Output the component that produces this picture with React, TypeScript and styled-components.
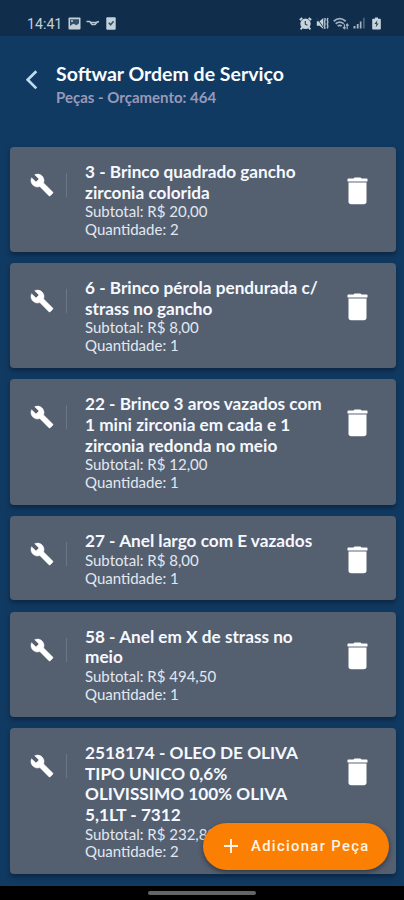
import React from "react";
import styled, { createGlobalStyle } from "styled-components";
import { MdBuild } from "react-icons/md";

const GlobalStyle = createGlobalStyle`
  * { box-sizing: border-box; }
  html, body { margin: 0; padding: 0; background: #000; }
  body { font-family: Lato, "Liberation Sans", sans-serif; }
`;

const Screen = styled.div`
  position: relative;
  display: flex;
  flex-direction: column;
  width: 404px;
  height: 900px;
  overflow: hidden;
  background: #113a62;
`;

const StatusBar = styled.div`
  display: flex;
  flex: none;
  align-items: center;
  justify-content: space-between;
  height: 36px;
  padding: 10px 23px 0 27px;
  background: #102d4b;
  color: #c3ced9;
`;

const StatusGroup = styled.div<{ $gap: number }>`
  display: flex;
  align-items: center;
  gap: ${(p) => p.$gap}px;
`;

const Clock = styled.span`
  width: 35px;
  padding-top: 1px;
  font: 400 14.2px/16px Roboto, sans-serif;
  white-space: nowrap;
`;

const BatterySlot = styled.div`
  display: flex;
  margin-left: 3px;
`;

const Header = styled.header`
  display: flex;
  flex: none;
  height: 111px;
  padding: 26px 24px 0 26px;
`;

const BackButton = styled.button`
  display: flex;
  width: 30px;
  height: 32px;
  padding: 8px 0 0;
  border: 0;
  background: none;
  color: #bfdbef;
`;

const Title = styled.h1`
  margin: 0;
  color: #fafcff;
  font-size: 19.5px;
  line-height: 23px;
  font-weight: 700;
  white-space: nowrap;
`;

const Subtitle = styled.p`
  margin: 3px 0 0;
  color: #9899b9;
  font-size: 15px;
  line-height: 18px;
  font-weight: 700;
`;

const List = styled.main`
  display: flex;
  flex: 1;
  flex-direction: column;
  gap: 11.5px;
  padding: 0 8.5px 0 10px;
`;

const Card = styled.article`
  display: flex;
  flex: none;
  align-items: flex-start;
  padding: 14.8px 20px 13.1px;
  border-radius: 4px;
  background: #545f70;
  box-shadow: 0 3px 5px rgba(7, 22, 42, 0.55);
`;

const ToolIcon = styled.div`
  display: flex;
  width: 37px;
  height: 24px;
  margin: 11px 0 0;
  color: #fff;

  path:last-child {
    stroke: currentColor;
    stroke-width: 0.5px;
  }
`;

const Divider = styled.div`
  width: 1px;
  height: 24px;
  margin: 11px 18px 0 -1px;
  background: #6c7686;
`;

const CardText = styled.div`
  width: 240px;
  color: #eef3fb;
`;

const PartName = styled.h2`
  margin: 0;
  color: #f5f9ff;
  font-size: 17.2px;
  line-height: 20.7px;
  font-weight: 700;
  white-space: pre;
`;

const Detail = styled.p`
  margin: 0;
  color: #e2e8f1;
  font-size: 15px;
  line-height: 17.7px;
  white-space: nowrap;
`;

const DeleteButton = styled.button`
  display: flex;
  flex: none;
  margin: 15px 0 0 22px;
  padding: 0;
  border: 0;
  background: none;
`;

const AddButton = styled.button`
  position: absolute;
  right: 15px;
  bottom: 30px;
  display: flex;
  align-items: center;
  gap: 13px;
  width: 186px;
  height: 47px;
  padding: 0 0 1px 21px;
  border: 0;
  border-radius: 24px;
  background: #fa7f02;
  box-shadow: 0 2px 5px rgba(20, 28, 42, 0.6);
  color: #fff5e8;
  font: 500 14.8px/20px Roboto, sans-serif;
  letter-spacing: 1.33px;
  white-space: nowrap;
`;

const NavigationBar = styled.div`
  display: flex;
  flex: none;
  justify-content: center;
  height: 14px;
  padding-top: 5px;
  background: #000;
`;

const HomeHandle = styled.div`
  width: 108px;
  height: 4px;
  border-radius: 2px;
  background: #656565;
`;

interface Part {
  name: string;
  subtotal: string;
  quantity: number;
}

const parts: Part[] = [
  { name: "3 - Brinco quadrado gancho\nzirconia colorida", subtotal: "20,00", quantity: 2 },
  { name: "6 - Brinco pérola pendurada c/\nstrass no gancho", subtotal: "8,00", quantity: 1 },
  { name: "22 - Brinco 3 aros vazados com\n1 mini zirconia em cada e 1\nzirconia redonda no meio", subtotal: "12,00", quantity: 1 },
  { name: "27 - Anel largo com E vazados", subtotal: "8,00", quantity: 1 },
  { name: "58 - Anel em X de strass no\nmeio", subtotal: "494,50", quantity: 1 },
  { name: "2518174 - OLEO DE OLIVA\nTIPO UNICO 0,6%\nOLIVISSIMO 100% OLIVA\n5,1LT - 7312", subtotal: "232,80", quantity: 2 },
];

const TrashIcon = () => (
  <svg width="21" height="28" viewBox="0 0 21 28">
    <path d="M6.5 1.5 7.5.5h6l1 1h5.2q.8 0 .8.8v2.2H.5V2.3q0-.8.8-.8z" fill="#fff" />
    <path d="M1.5 4.5h18v1.8h-18z" fill="#aeb4bd" />
    <path d="M1.5 6h18v18.5q0 2.7-2.7 2.7H4.2q-2.7 0-2.7-2.7z" fill="#fff" />
  </svg>
);

const PictureIcon = () => (
  <svg width="13" height="13" viewBox="0 0 13 13">
    <rect x=".5" y=".5" width="12" height="12" rx="1" fill="#c3d0d8" />
    <path d="M2 2.2h9v4L8.5 8.3 5.3 6.8 2 9z" fill="#345168" />
    <circle cx="4" cy="4" r="1" fill="#c3d0d8" />
  </svg>
);

const KeyIcon = () => (
  <svg width="14" height="13" viewBox="0 0 14 13" fill="none" stroke="#b9c7d3">
    <path d="M.5 4.5h3l1.5 1h5l3-1" strokeWidth="1.6" />
    <path d="M4.5 5.5 6 7.6h3l2-2.4" strokeWidth="1.5" />
  </svg>
);

const TaskIcon = () => (
  <svg width="10" height="13" viewBox="0 0 10 13">
    <rect x=".3" y=".3" width="9.4" height="12.4" rx="1" fill="#c3d3dc" />
    <path d="m2.8 5.7 1.8 2 3-3.4" fill="none" stroke="#38536a" strokeWidth="1.7" />
  </svg>
);

const AlarmIcon = () => (
  <svg width="13" height="13" viewBox="0 0 13 13">
    <circle cx="6.5" cy="6.8" r="5.2" fill="#c7d4dc" />
    <path d="m.8 3 2.5-2M9.7 1l2.5 2M3.2 10.5l-1.6 1.8m8.2-1.8 1.6 1.8" stroke="#c7d4dc" strokeWidth="1.9" />
    <path d="M6.3 4v3.2l2.2 1" fill="none" stroke="#284660" strokeWidth="1.2" />
  </svg>
);

const MuteIcon = () => (
  <svg width="13" height="13" viewBox="0 0 13 13">
    <path d="M.8 4.2h2.8l3.7-3.3v11L3.6 8.8H.8z" fill="#c7d4dc" />
    <path d="m.6.7 7.7 11" stroke="#25425d" strokeWidth="1" />
    <path d="M9 1v2.2L8.5 5 9 7l-.5 2.2.5 2.6M11.8 1l-.5 2 .5 2-.5 2 .5 2-.5 2.5" fill="none" stroke="#aebdca" strokeWidth="1.5" />
  </svg>
);

const WifiIcon = () => (
  <svg width="16" height="13" viewBox="0 0 16 13" fill="none" stroke="#9fb0c0">
    <path d="M.7 4.2q6-5.2 12 0M2.7 6.7q4-3.2 8 0M4.7 9q2-1.4 4 0" strokeWidth="1.8" />
    <path d="M6.7 11.5h.1" strokeWidth="2" />
    <path d="M11.4 7.2v4.6m2.8.4V7M9.9 10.2l1.5 1.6 1.2-1.6m.4-1.6 1.2-1.6 1.4 1.6" strokeWidth="1.2" />
  </svg>
);

const SignalIcon = () => (
  <svg width="12" height="12" viewBox="0 0 12 12">
    <path d="M.5 9h2v2.5h-2zM3.8 7h1.8v4.5H3.8zM6.8 4.5h1.7v7H6.8z" fill="#a6b5c3" />
    <path d="M10 .7h1.7v10.8H10z" fill="#4b657e" />
  </svg>
);

const BatteryIcon = () => (
  <svg width="9" height="13" viewBox="0 0 9 13">
    <path d="M3 .5h3v1.2h2q.8 0 .8.8v9.3q0 .8-.8.8H1q-.8 0-.8-.8V2.5q0-.8.8-.8h2z" fill="#c7d4dc" />
    <path d="M5.4 3.3 2.4 7h2L3.7 10.4 6.6 6.5H4.8z" fill="#29445b" />
  </svg>
);

export default function App() {
  return (
    <>
      <GlobalStyle />
      <Screen>
        <StatusBar>
          <StatusGroup $gap={5.5}>
            <Clock>14:41</Clock>
            <PictureIcon />
            <KeyIcon />
            <TaskIcon />
          </StatusGroup>
          <StatusGroup $gap={4}>
            <AlarmIcon />
            <MuteIcon />
            <WifiIcon />
            <SignalIcon />
            <BatterySlot><BatteryIcon /></BatterySlot>
          </StatusGroup>
        </StatusBar>
        <Header>
          <BackButton aria-label="Voltar">
            <svg width="12" height="20" viewBox="0 0 12 20">
              <path d="m10.3 1.2-8.6 8.6 8.6 8.6" fill="none" stroke="currentColor" strokeWidth="2.7" />
            </svg>
          </BackButton>
          <div>
            <Title>Softwar Ordem de Serviço</Title>
            <Subtitle>Peças - Orçamento: 464</Subtitle>
          </div>
        </Header>
        <List>
          {parts.map((part) => (
            <Card key={part.name}>
              <ToolIcon><MdBuild size={24} /></ToolIcon>
              <Divider />
              <CardText>
                <PartName>{part.name}</PartName>
                <Detail>Subtotal: R$ {part.subtotal}</Detail>
                <Detail>Quantidade: {part.quantity}</Detail>
              </CardText>
              <DeleteButton aria-label="Excluir"><TrashIcon /></DeleteButton>
            </Card>
          ))}
        </List>
        <NavigationBar><HomeHandle /></NavigationBar>
        <AddButton>
          <svg width="14" height="14" viewBox="0 0 14 14">
            <path d="M7 0v14M0 7h14" stroke="currentColor" strokeWidth="1.9" />
          </svg>
          Adicionar Peça
        </AddButton>
      </Screen>
    </>
  );
}
